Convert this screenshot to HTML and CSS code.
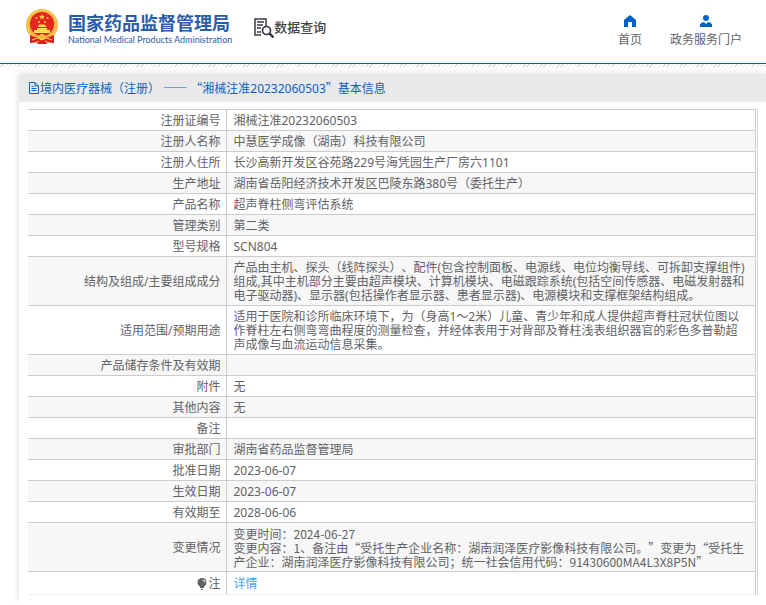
FILE: index.html
```html
<!DOCTYPE html>
<html lang="zh-CN">
<head>
    <meta charset="UTF-8">
    <meta name="viewport" content="width=device-width, initial-scale=1.0">
    <title>数据查询</title>
    <link rel="stylesheet" href="styles.css">
</head>
<body>
    <header class="header">
        <a class="logo" href="#">
            <svg class="emblem" viewBox="0 0 32 35" aria-hidden="true">
                <path d="M5 24h22l1 10-6-1-2 1.500h-8l-2-1.500-6 1z" fill="#d9201c"/>
                <circle cx="16" cy="16" r="16" fill="#f0b43c"/>
                <circle cx="16" cy="16" r="14.500" fill="none" stroke="#f9d35c" stroke-width="1.500" stroke-dasharray="2 1"/>
                <circle cx="16" cy="15" r="12" fill="#e5261f"/>
                <path d="M16 5l.9 2h2.100l-1.700 1.300.7 2.100-2-1.300-2 1.300.7-2.100L13 7h2.100z" fill="#ffd94a"/>
                <g fill="#ffd94a">
                    <circle cx="10.500" cy="9" r="1"/>
                    <circle cx="21.500" cy="9" r="1"/>
                    <circle cx="13" cy="13" r="1"/>
                    <circle cx="19" cy="13" r="1"/>
                    <path d="M12 17l1.500-1.500h5L20 17v1h-8zM11 19h10v2h3v3H8v-3h3z"/>
                </g>
                <path d="M4 26l5 2 4 1h6l4-1 5-2v8l-6-1-2 2h-8l-2-2-6 1z" fill="#d9201c"/>
                <path d="M6 31l6-2 4 2 4-2 6 2M9 34l4-2M23 34l-4-2" fill="none" stroke="#ffd94a"/>
                <circle cx="16" cy="28" r="2.500" fill="#f0b43c" stroke="#ffd94a"/>
            </svg>
            <span class="logo-text">
                <span class="logo-cn">国家药品监督管理局</span>
                <span class="logo-en">National Medical Products Administration</span>
            </span>
        </a>
        <div class="search-title">
            <svg class="search-icon" viewBox="0 0 20 20" fill="none" stroke="#383842" aria-hidden="true">
                <path d="M12 8V1H1v16h6" stroke-width="1.500"/>
                <path d="M3 4h7M3 7h6M3 10h4M3 14h4" stroke-width="1.300"/>
                <circle cx="12.500" cy="12.500" r="4" stroke-width="1.700"/>
                <path d="M15.500 15.500l4 4" stroke-width="2.500"/>
            </svg>
            <span>数据查询</span>
        </div>
        <nav class="nav">
            <a href="#">
                <svg viewBox="0 0 12 12" aria-hidden="true"><path d="M6 0l6 5v7H8V7H4v5H0V5z"/></svg>
                首页
            </a>
            <a href="#">
                <svg viewBox="0 0 12 12" aria-hidden="true"><circle cx="6" cy="3" r="3"/><path d="M0 12V9.500Q1 7 4 7l2 2 2-2q3 0 4 2.500V12z"/></svg>
                政务服务门户
            </a>
        </nav>
    </header>
    <div class="strip"></div>

    <main class="panel">
        <h1 class="panel-title">
            <svg viewBox="0 0 12 12" fill="none" stroke="#0a63c4" aria-hidden="true"><path d="M1.500.5H7L10.500 4v7.500h-9zM7 .5V4h3.500M3.500 4.500h2M3.500 6.500h5M3.500 8.500h5"/></svg>
            <span>境内医疗器械（注册） <b class="cjk">——</b> <b class="cjk">“</b>湘械注准20232060503<b class="cjk">”</b>基本信息</span>
        </h1>
        <div class="table-box">
            <table>
                <tbody>
                    <tr><th>注册证编号</th><td>湘械注准20232060503</td></tr>
                    <tr><th>注册人名称</th><td>中慧医学成像（湖南）科技有限公司</td></tr>
                    <tr><th>注册人住所</th><td>长沙高新开发区谷苑路229号海凭园生产厂房六1101</td></tr>
                    <tr><th>生产地址</th><td>湖南省岳阳经济技术开发区巴陵东路380号（委托生产）</td></tr>
                    <tr><th>产品名称</th><td>超声脊柱侧弯评估系统</td></tr>
                    <tr><th>管理类别</th><td>第二类</td></tr>
                    <tr><th>型号规格</th><td>SCN804</td></tr>
                    <tr><th>结构及组成/主要组成成分</th><td>产品由主机、探头（线阵探头）、配件(包含控制面板、电源线、电位均衡导线、可拆卸支撑组件)组成,其中主机部分主要由超声模块、计算机模块、电磁跟踪系统(包括空间传感器、电磁发射器和电子驱动器)、显示器(包括操作者显示器、患者显示器)、电源模块和支撑框架结构组成。</td></tr>
                    <tr><th>适用范围/预期用途</th><td>适用于医院和诊所临床环境下，为（身高1～2米）儿童、青少年和成人提供超声脊柱冠状位图以作脊柱左右侧弯弯曲程度的测量检查，并经体表用于对背部及脊柱浅表组织器官的彩色多普勒超声成像与血流运动信息采集。</td></tr>
                    <tr><th>产品储存条件及有效期</th><td></td></tr>
                    <tr><th>附件</th><td>无</td></tr>
                    <tr><th>其他内容</th><td>无</td></tr>
                    <tr><th>备注</th><td></td></tr>
                    <tr><th>审批部门</th><td>湖南省药品监督管理局</td></tr>
                    <tr><th>批准日期</th><td>2023-06-07</td></tr>
                    <tr><th>生效日期</th><td>2023-06-07</td></tr>
                    <tr><th>有效期至</th><td>2028-06-06</td></tr>
                    <tr><th>变更情况</th><td class="cjk change">变更时间：2024-06-27
变更内容：1、备注由“受托生产企业名称：湖南润泽医疗影像科技有限公司。”变更为“受托生产企业：湖南润泽医疗影像科技有限公司；统一社会信用代码：91430600MA4L3X8P5N”</td></tr>
                    <tr class="note"><th><svg viewBox="0 0 10 12" aria-hidden="true"><circle cx="5" cy="4.500" r="4.500"/><path d="M3 8h4v2H3zM4 11h2v1H4z"/><path d="M5.500 2Q8 2 8 4.500" fill="none" stroke="#fff"/></svg>注</th><td><a href="#">详情</a></td></tr>
                </tbody>
            </table>
        </div>
    </main>
</body>
</html>
```
FILE: styles.css
```css
* {
    box-sizing: border-box;
}
body {
    margin: 0;
    font-family: "Noto Sans", "Noto Sans CJK SC", sans-serif;
    font-size: 12px;
    line-height: 14px;
    color: #606266;
    background: #fff;
    text-spacing-trim: space-all;
}
a {
    color: #409eff;
    text-decoration: none;
}

/* Header */
.header {
    display: flex;
    align-items: flex-start;
    height: 64px;
    padding: 9px 24px 0 26px;
    border-bottom: 1px solid #0061bd;
}
.strip {
    height: 3px;
    background: repeating-linear-gradient(135deg, #fff 0 2px, #ddd 2px 3px);
}
.logo {
    display: flex;
    gap: 10px;
    color: #2a5caa;
}
.emblem {
    width: 32px;
    height: 35px;
}
.logo-text {
    display: flex;
    flex-direction: column;
    padding-top: 3px;
    white-space: nowrap;
}
.logo-cn {
    font-family: "Noto Sans CJK SC", sans-serif;
    font-size: 18px;
    font-weight: bold;
    line-height: 20px;
}
.logo-en {
    font-family: Lato, sans-serif;
    font-size: 9px;
    font-weight: normal;
    line-height: 16px;
}
.search-title {
    display: flex;
    margin-left: 22px;
    padding-top: 9px;
    font-size: 13px;
    font-weight: 500;
    line-height: 18px;
    color: #444;
}
.search-icon {
    width: 20px;
    height: 20px;
}
.nav {
    display: flex;
    gap: 28px;
    margin-left: auto;
    padding-top: 6px;
}
.nav a {
    display: flex;
    flex-direction: column;
    align-items: center;
    gap: 6px;
    color: #606266;
}
.nav svg {
    width: 12px;
    height: 12px;
    fill: #0061c8;
}

/* Detail panel */
.panel {
    margin: 7px 0 0 19px;
    padding-bottom: 7px;
    box-shadow: 0 0 8px rgba(0, 0, 0, 0.15);
}
.panel-title {
    display: flex;
    align-items: center;
    height: 28px;
    margin: 0;
    padding-left: 9px;
    font-size: 12px;
    font-weight: normal;
    color: #0a63c4;
    background: #e9e9e9;
}
.panel-title svg {
    width: 12px;
    height: 12px;
}
.cjk {
    font-family: "Noto Sans CJK SC", sans-serif;
    font-weight: normal;
}
.table-box {
    margin: 7px 8px 0 9px;
    border-right: 1px solid #d4d6dc;
    padding-right: 1px;
}
table {
    width: 100%;
    border-collapse: collapse;
    table-layout: fixed;
    border-top: 1px solid #ccc;
    border-right: 1px solid #ccc;
}
th, td {
    height: 21px;
    padding: 4px 7px 2px;
    border-bottom: 1px solid #ccc;
    font-weight: normal;
}
th {
    width: 198px;
    padding-right: 5px;
    text-align: right;
    border-right: 1px solid #ccc;
}
tr:nth-child(even) {
    background: #f7f7f7;
}
.change {
    white-space: pre-line;
}
.note th, .note td {
    height: 23px;
    border-bottom-color: #ebeef5;
}
.note svg {
    width: 10px;
    height: 12px;
    margin-right: 1px;
    vertical-align: -2px;
    fill: #606266;
}
```
